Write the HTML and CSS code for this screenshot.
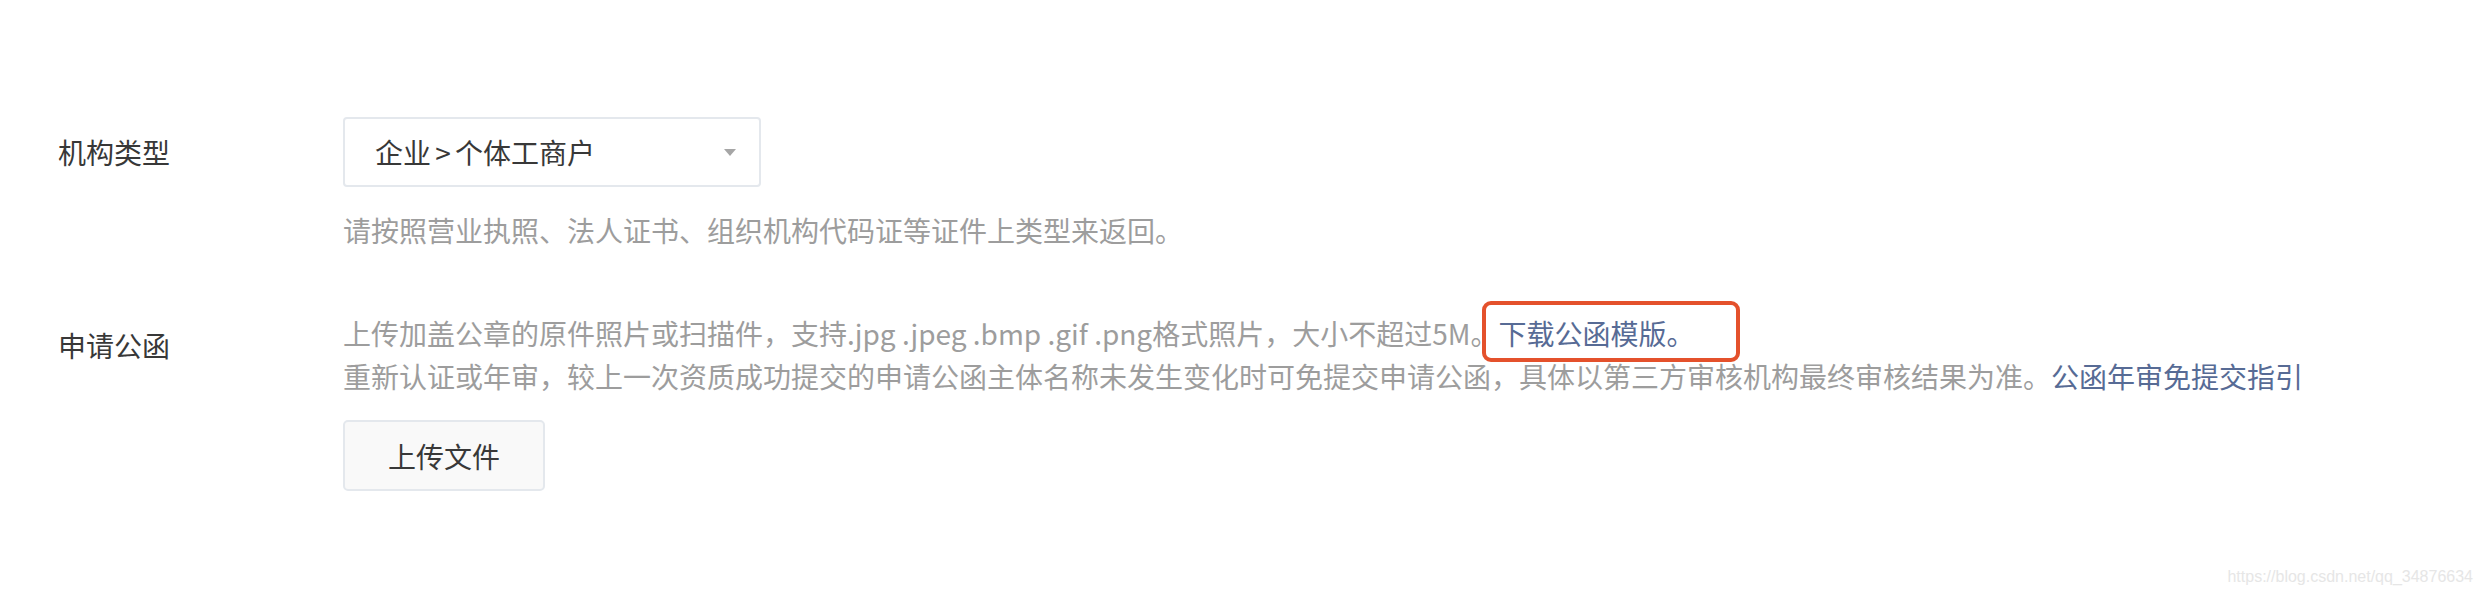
FILE: index.html
```html
<!DOCTYPE html>
<html lang="zh-CN">
<head>
  <meta charset="UTF-8">
  <meta name="viewport" content="width=device-width, initial-scale=1.0">
  <title>机构信息</title>
  <link rel="stylesheet" href="styles.css">
</head>
<body>
  <div class="form">
    <div class="form-row">
      <label class="form-label">机构类型</label>
      <div class="form-control">
        <div class="select">
          <span class="select-value">企业 &gt; 个体工商户</span>
          <span class="select-arrow"></span>
        </div>
        <p class="tips">请按照营业执照、法人证书、组织机构代码证等证件上类型来返回。</p>
      </div>
    </div>

    <div class="form-row row-letter">
      <label class="form-label label-letter">申请公函</label>
      <div class="form-control">
        <p class="tips">上传加盖公章的原件照片或扫描件，支持.jpg .jpeg .bmp .gif .png格式照片，大小不超过5M。<a class="link mark" href="#">下载公函模版。</a></p>
        <p class="tips">重新认证或年审，较上一次资质成功提交的申请公函主体名称未发生变化时可免提交申请公函，具体以第三方审核机构最终审核结果为准。<a class="link" href="#">公函年审免提交指引</a></p>
        <button class="btn" type="button">上传文件</button>
      </div>
    </div>
  </div>

  <div class="watermark">https://blog.csdn.net/qq_34876634</div>
</body>
</html>
```

FILE: styles.css
```css
*{box-sizing:border-box;margin:0;padding:0}
body{background:#fff;font-family:"Noto Sans CJK SC","Noto Sans",sans-serif;font-size:28px;color:#383838;min-height:594px;position:relative}
.form{padding-top:117px}
.form-row{display:flex}
.form-label{width:343px;padding-left:58px;line-height:70px;flex-shrink:0}
.form-control{flex:1}
.select{width:418px;height:70px;border:2px solid #e4e8ed;border-radius:4px;display:flex;align-items:center;justify-content:space-between;padding:0 23px 0 30px}
.select-value{line-height:1;word-spacing:-2px}
.select-arrow{width:0;height:0;border-left:6px solid transparent;border-right:6px solid transparent;border-top:7px solid #a6a6a6}
.tips{color:#9d9d9d;line-height:43px}
.select + .tips{margin-top:22px}
.row-letter{margin-top:60px}
.label-letter{line-height:43px;padding-top:12px}
.link{color:#576b95;text-decoration:none}
.mark{position:relative}
.mark::after{content:"";position:absolute;left:-16px;right:-46px;top:-12px;bottom:-9px;border:4px solid #e4512c;border-radius:9px}
.btn{margin-top:22px;width:202px;height:71px;background:#f9f9f9;border:2px solid #e4e8ed;border-radius:5px;font-family:inherit;font-size:28px;color:#383838;cursor:pointer}
.watermark{position:absolute;right:9px;bottom:8px;font-family:"Liberation Sans",Arial,sans-serif;font-size:16px;color:#e6e6e6}
```
